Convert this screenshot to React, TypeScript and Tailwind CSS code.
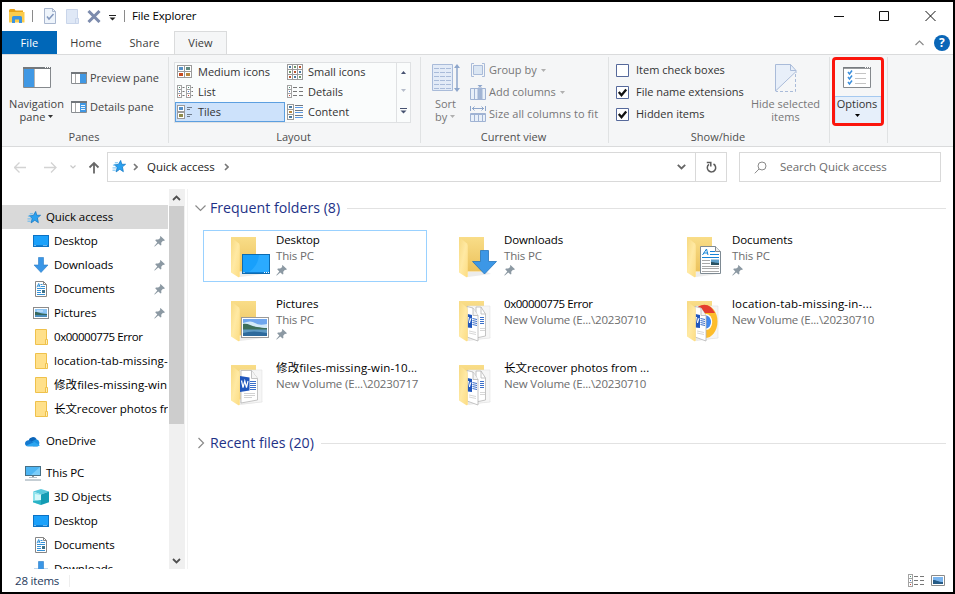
import type { ReactNode } from "react";
import clsx from "clsx";

/* ---------- small icons ---------- */

function Caret({ className = "text-[#333]" }: { className?: string }) {
  return (
    <svg width="5" height="3" viewBox="0 0 5 3" className={clsx("inline-block", className)} fill="currentColor">
      <path d="M0 0h5L2.5 3z" />
    </svg>
  );
}

function Pin() {
  return (
    <svg width="11" height="11" viewBox="0 0 11 11" fill="#8c99a3">
      <path d="M6.5 0 11 4.2 9.7 5 9 4.8 7.2 6.8 7.4 9 6.6 9.6 4.3 7.5 0.8 10.6 0.2 10.2 3.3 6.5 1.2 4.3 2 3.5 4.2 3.6 6.3 1.9 5.9 1z" />
    </svg>
  );
}

function Star() {
  return (
    <svg width="14" height="13" viewBox="0 0 15 14">
      <path d="M9.3 0.5 10.5 4.6 14.6 4.6 11.2 7.4 12.2 12.6 8.4 10 4.4 12.8 5.5 8 2.6 5.2 6.8 4.8z" fill="#2aa1f0" stroke="#1177c4" strokeWidth="0.8" />
      <path d="M3 3h3.500M1 5.500h3M0.5 8.5h4M0.5 11h3.500" stroke="#4fb2f2" strokeWidth="0.9" />
    </svg>
  );
}

function DesktopIcon() {
  return (
    <svg width="16" height="16" viewBox="0 0 16 16">
      <rect x="0.5" y="2.5" width="15" height="11" fill="#1ba1fb" stroke="#0b72c4" />
      <path d="M1 12.5h14" stroke="#0f7fd4" />
      <path d="M1.5 12.5h1M10.5 12.5h1M12.5 12.5h1" stroke="#d5ecff" />
    </svg>
  );
}

function DownloadIcon() {
  return (
    <svg width="16" height="16" viewBox="0 0 16 16">
      <path d="M5.5.5h5v7.500h4.500L8 15.5 1 8h4.500z" fill="#3a96e6" stroke="#2a7cc8" strokeWidth="0.6" />
    </svg>
  );
}

function DocumentIcon() {
  return (
    <svg width="16" height="16" viewBox="0 0 16 16">
      <path d="M2.5.5h8l3 3v12h-11z" fill="#fff" stroke="#868686" />
      <path d="M10.5.5v3h3" fill="none" stroke="#868686" />
      <path d="M4 6.2 5.7 2.5 7.2 6.2M4.8 5h2M7.5 3.5h2M8 5.5h4M4 7.5h8M4 9.5h4M4 11.5h4M4 13.5h8" stroke="#1f86d2" strokeWidth="0.9" fill="none" />
      <rect x="9" y="9" width="3" height="3" fill="#3f7188" />
    </svg>
  );
}

function PictureIcon() {
  return (
    <svg width="16" height="16" viewBox="0 0 16 16">
      <rect x="0.5" y="2.5" width="15" height="11" fill="#fff" stroke="#8b8b8b" />
      <path d="M2 4h12v8H2z" fill="#8cc4f3" />
      <path d="M4 5.500h6v1H4z" fill="#dcefff" />
      <path d="M2 7c3-.5 4 1.500 12 2v1H2z" fill="#36685d" />
      <path d="M2 10h12v2H2z" fill="#4c8dbb" />
    </svg>
  );
}

function FolderIcon() {
  return (
    <svg width="16" height="16" viewBox="0 0 16 16">
      <path d="M2.500.500h11v15h-11z" fill="#ffe08a" stroke="#efc14b" />
      <path d="M12.500 15.500v-5h2v5z" fill="#ffeeb5" stroke="#efc14b" />
    </svg>
  );
}

function CloudIcon() {
  return (
    <svg width="16" height="16" viewBox="0 0 16 16">
      <path d="M3.500 7.500a4.500 4.500 0 0 1 8.200-1.200L8 10z" fill="#0a63b8" />
      <path d="M11.300 6.300a3.700 3.700 0 0 1 1 7H8l-1-5z" fill="#1b8fe0" />
      <path d="M3.600 7.200C1.500 7.400 0 8.500 0 10.400 0 12.200 1.400 13.300 3 13.300h10L6.500 8.200a5 5 0 0 0-2.900-1z" fill="#1479cf" />
      <path d="M1.200 12.600 9.500 9l5.300 3.300c-.5.700-1.200 1-2 1H3c-.700 0-1.300-.300-1.800-.700z" fill="#2ba5f0" />
    </svg>
  );
}

function PcIcon() {
  return (
    <svg width="16" height="16" viewBox="0 0 16 16">
      <rect x="0.5" y="1.500" width="15" height="9" fill="#4db5f3" stroke="#477086" />
      <path d="M15 2v8H6z" fill="#7accf9" />
      <path d="M7 11.500h2" stroke="#8b9399" />
      <path d="M4 12.500h8" stroke="#b8c2c9" />
      <path d="M0 15h16" stroke="#8b9da9" />
    </svg>
  );
}

function CubeIcon() {
  return (
    <svg width="16" height="16" viewBox="0 0 16 16">
      <path d="M8 0 16 2.500 8 5.500 0 2.500z" fill="#57c8dc" />
      <path d="M0 2.500 8 5.500V16L0 13.300z" fill="#8fe3ec" />
      <path d="M2 5 8 6v7l-6-2z" fill="#d5f8fa" />
      <path d="M8 5.500 16 2.500V13.300L8 16z" fill="#149cb4" />
      <path d="M0 12 8 11v5L0 13.300z" fill="#2bb3c6" />
    </svg>
  );
}

/* ---------- large tile icons ---------- */

type Overlay = "desktop" | "downloads" | "documents" | "pictures" | "word" | "words" | "chrome";

function BigFolder({ overlay }: { overlay: Overlay }) {
  const filled = overlay === "word" || overlay === "words" || overlay === "chrome";
  return (
    <svg width="45" height="45" viewBox="0 0 45 45" className="shrink-0">
      <defs>
        <linearGradient id={`back-${overlay}`} x1="0" y1="0" x2="0" y2="1">
          <stop offset="0" stopColor="#f9dd88" />
          <stop offset="1" stopColor="#ebc25c" />
        </linearGradient>
        <linearGradient id={`flap-${overlay}`} x1="0" y1="0" x2="1" y2="1">
          <stop offset="0" stopColor="#f7d981" />
          <stop offset="0.500" stopColor="#ffe9a3" />
          <stop offset="1" stopColor="#fcdc82" />
        </linearGradient>
      </defs>
      <path d="M9 36h19l4 2-23 3z" fill="#ececec" />
      <path d="M0 1h25v34.500H8z" fill={`url(#back-${overlay})`} />
      {filled && (
        <g>
          <path d="M9 6h22v32l-21 2z" fill="#f6f6f6" stroke="#e2e2e2" strokeWidth="0.600" />
          {overlay === "chrome" && (
            <g>
              <ellipse cx="18" cy="21.500" rx="12.500" ry="16.500" fill="#fdbd2c" />
              <path d="M11 6.500Q22 1 28 13H14z" fill="#e43d30" />
              <ellipse cx="19" cy="22" rx="6.200" ry="8" fill="#fff" />
              <ellipse cx="19" cy="22" rx="5" ry="6.500" fill="#4288ed" />
            </g>
          )}
          {overlay === "word" ? (
            <g>
              <path d="M10 6.500h10.500l6 8V36L10 39z" fill="#fff" stroke="#b5b5b5" strokeWidth="0.800" />
              <path d="M20.500 6.500v8h6" fill="#f5f5f5" stroke="#b5b5b5" strokeWidth="0.800" />
              <path d="m9 12 9.500 1.500v13L9 28z" fill="#1f56bd" />
              <path d="m10.500 16.500 1.500 7 1.800-6.500 1.700 6.500 1.500-6.500" stroke="#fff" fill="none" strokeWidth="1.200" />
              <path d="M19 17.500h6M19 19.500h6M19 21.500h6M19 23.500h6M19 25.500h6" stroke="#3b6fc9" strokeWidth="1" />
              <path d="M13 29.500h11M13 31.500h11M13 33.500h8" stroke="#bfbfbf" strokeWidth="0.700" />
            </g>
          ) : (
            <g>
              {overlay === "words" && (
                <g>
                  <path d="M17 7h5l4.500 7v22L17 38z" fill="#fff" stroke="#b5b5b5" strokeWidth="0.800" />
                  <path d="M22 7v7h4.500" fill="none" stroke="#b5b5b5" strokeWidth="0.800" />
                  <path d="M21 17.500h4M21 19.500h4M21 21.500h4M21 23.500h4" stroke="#3b6fc9" />
                  <path d="M21 28.500h5M21 30.500h5" stroke="#c5c5c5" strokeWidth="0.700" />
                </g>
              )}
              <path d="m8 6.500 6 1.500 5 7.500V41L8 37z" fill="#fff" stroke="#b5b5b5" strokeWidth="0.800" />
              <path d="M14 8v7.500h5" fill="#f4f4f4" stroke="#b5b5b5" strokeWidth="0.800" />
              <path d="m8.500 14 4.500 1v13l-4.500-.5z" fill="#1f56bd" />
              <path d="m9.500 17 1 6 1.500-5" stroke="#fff" fill="none" />
              <path d="m13.500 18.500 4.500 1M13.500 20.500l4.500 1M13.500 22.500l4.500 1M13.500 24.500l4.500 1" stroke="#3b6fc9" />
              <path d="m10 31 7 1.500M10 33l7 1.500" stroke="#c5c5c5" strokeWidth="0.700" />
            </g>
          )}
        </g>
      )}
      <path d="M0 1 8 7.500Q8.800 8.500 8.800 10v30.500q-.3 1.200-1.800.500L0 36.500z" fill={`url(#flap-${overlay})`} />
      {overlay === "desktop" && (
        <g>
          <rect x="11.500" y="18.500" width="27" height="19" fill="#18a0fb" stroke="#0d6bb0" />
          <path d="M28 19h10v17H18q9-6 10-17z" fill="#2babff" />
          <path d="M12 36.500h26" stroke="#0f7fd4" />
          <path d="M12.500 36.500h1M33 36.500h1M35 36.500h1M37 36.500h1" stroke="#fff" />
        </g>
      )}
      {overlay === "downloads" && (
        <path d="M21.500 14.500h8v11h8L25.500 38 13.500 25.500h8z" fill="#3c97e6" stroke="#2475bd" strokeWidth="0.800" />
      )}
      {overlay === "documents" && (
        <g>
          <path d="M13.500 10.500h15l5 5v22h-20z" fill="#fff" stroke="#7e8a93" />
          <path d="M28.500 10.500v5h5" fill="#eee" stroke="#7e8a93" />
          <path d="m15.500 19 4-6 1.500 6M16.700 17h4M23 15.500h5M23 18.500h9M15 21.500h17" stroke="#1583d6" fill="none" />
          <path d="M15 24.500h8M15 27.500h8M15 30.500h17M15 32.500h17M15 35.500h17" stroke="#a8a8a8" />
          <rect x="24" y="23.500" width="8" height="5.500" fill="#5f9fc9" />
          <path d="M24 26c3 0 4 1 8 1v2h-8z" fill="#2a5262" />
        </g>
      )}
      {overlay === "pictures" && (
        <g>
          <rect x="10.500" y="17.500" width="27" height="20" fill="#fff" stroke="#9a9a9a" />
          <path d="M12 19h24v17H12z" fill="#6fa6ee" />
          <path d="M12 23q8-3 12 0t12 1v5H12z" fill="#d3e9f9" />
          <path d="M12 24c5-1 8 2 14 3 4 .500 6 1 10 1v2H12z" fill="#3d6f5b" />
          <path d="M12 29.500h24V36H12z" fill="#5f9ac4" />
          <path d="M12 33q10-3 24 0v3H12z" fill="#2e6a9c" />
        </g>
      )}
    </svg>
  );
}

/* ---------- title bar ---------- */

function TitleBar() {
  return (
    <div className="flex h-[29px] items-center pb-px">
      <svg width="16" height="14" viewBox="0 0 16 14" className="ml-[7px]">
        <path d="M0 1.500Q0 0 1.500 0h4l1 1.500h7.500v3H0z" fill="#e8a317" />
        <path d="M0 3h15.500v10.500H0z" fill="#fccc4b" />
        <path d="M3 14V8.500Q3 7 4.500 7h7Q13 7 13 8.500V14h-3v-3.500H6V14z" fill="#3b93e0" />
      </svg>
      <span className="ml-[7px] h-3 w-px bg-[#8a8a8a]" />
      <svg width="12" height="16" viewBox="0 0 12 16" className="ml-[11px]" fill="none">
        <path d="M.500.500h8l3 3v12H.500z" fill="#eef4fb" stroke="#a9b7cf" />
        <path d="M8.500.500v3h3" stroke="#a9b7cf" />
        <path d="m3 8.500 2 2.500 4.500-5" stroke="#8297bd" strokeWidth="1.500" />
      </svg>
      <svg width="13" height="15" viewBox="0 0 13 15" className="ml-[10px]">
        <path d="M.500.500h11v9h1v5h-12z" fill="#dfe8f6" stroke="#c9d5ea" />
        <path d="M9.500 14.500v-5h3" fill="none" stroke="#c9d5ea" />
      </svg>
      <svg width="14" height="13" viewBox="0 0 14 13" className="ml-[8px]" stroke="#7c8bad" strokeWidth="3">
        <path d="m1.500 1 11 11M12.500 1l-11 11" />
      </svg>
      <svg width="7" height="6" viewBox="0 0 7 6" className="mt-[3px] ml-[8px]">
        <path d="M0 .500h7" stroke="#222" />
        <path d="M.500 2.500h6l-3 3z" fill="#222" />
      </svg>
      <span className="ml-[8px] h-3 w-px bg-[#8a8a8a]" />
      <span className="ml-[7px] text-[11.5px] tracking-[-0.15px] text-black">File Explorer</span>
      <svg width="102" height="12" viewBox="0 0 102 12" className="mr-[17px] ml-auto" fill="none" stroke="#111">
        <path d="M0 6.500h10M45.500 1.500h9v9h-9z" />
        <path d="m91.500 1 10 10M101.500 1l-10 10" />
      </svg>
    </div>
  );
}

function Tabs() {
  return (
    <div className="flex h-[23px] text-[11px] tracking-[0.1px] text-[#3b3b3b]">
      <div className="flex w-[55px] items-center justify-center bg-[#0067b8] pt-px text-white">File</div>
      <div className="flex w-[58px] items-center justify-center pt-px">Home</div>
      <div className="flex w-[59px] items-center justify-center pt-px">Share</div>
      <div className="-mb-px flex w-[53px] items-center justify-center border border-b-0 border-[#dadbdc] bg-[#f5f6f7]">View</div>
      <div className="ml-auto flex items-center">
        <svg width="9" height="6" viewBox="0 0 9 6" fill="none" stroke="#8a8a8a" className="mr-[10px]">
          <path d="m.500 5 4-4 4 4" strokeWidth="1.200" />
        </svg>
        <div className="mr-[3px] flex h-4 w-4 items-center justify-center rounded-full bg-[#0a66b7] text-xs font-bold text-white">?</div>
      </div>
    </div>
  );
}

/* ---------- ribbon ---------- */

function Group({ label, className, children }: { label: string; className: string; children: ReactNode }) {
  return (
    <div className={clsx("flex flex-col", className)}>
      <div className="flex h-[75px]">{children}</div>
      <div className="h-[14px] pr-[2px] text-center leading-[14px] text-[#4e4e4e]">{label}</div>
    </div>
  );
}

function Divider() {
  return <div className="mt-[2px] h-[86px] w-px bg-[#e0e2e3]" />;
}

function PaneIcon({ details }: { details?: boolean }) {
  return (
    <svg width="16" height="12" viewBox="0 0 16 12">
      <path d="M.500.500h15v11H.500z" fill="#fff" stroke="#898d91" />
      <path d="M0 1h16" stroke="#72777c" strokeWidth="2" />
      <path d="M4.500 2v9" stroke="#a9a9a9" />
      <path d="M9 2h6v9H9z" fill="#4098e4" />
      {details && <path d="M10 4.500h4M10 6.500h4M10 8.500h4" stroke="#fff" strokeWidth="0.900" />}
    </svg>
  );
}

function Thumb({ x, y, tone }: { x: number; y: number; tone: string }) {
  return (
    <g>
      <rect x={x + 0.5} y={y + 0.5} width="7" height="6" fill="#fff" stroke="#9b9b9b" />
      <rect x={x + 2} y={y + 2} width="4" height="3" fill={tone} />
    </g>
  );
}

function Dots({ x }: { x: number }) {
  return (
    <g>
      {["#4a8a72", "#4a79c9", "#c94a3d"].map((t, i) => (
        <g key={t}>
          <rect x={x + 0.5} y={i * 4 + 1.5} width="4" height="4" fill="#fff" stroke="#a3a3a3" />
          <rect x={x + 2} y={i * 4 + 3} width="1" height="1" fill={t} />
        </g>
      ))}
    </g>
  );
}

function LayoutIcon({ kind }: { kind: string }) {
  return (
    <svg width="16" height="16" viewBox="0 0 16 16">
      {kind === "medium" && (
        <g>
          <Thumb x={0} y={1} tone="#5590c8" />
          <Thumb x={7} y={1} tone="#628a80" />
          <Thumb x={0} y={7} tone="#c84a1e" />
          <Thumb x={7} y={7} tone="#b8863c" />
        </g>
      )}
      {kind === "small" &&
        [0, 5, 10].map((y, r) =>
          [0, 5, 10].map((x, c) => (
            <g key={`${x}-${y}`}>
              <rect x={x + 0.5} y={y + 0.5} width="5" height="5" fill="#fff" stroke="#9b9b9b" />
              <rect x={x + 2} y={y + 2} width="2" height="2" fill={(r + c) % 3 === 0 ? "#47799f" : (r + c) % 3 === 1 ? "#6d9467" : "#b8532e"} />
            </g>
          )),
        )}
      {kind === "list" && (
        <g>
          <Dots x={0} />
          <Dots x={9} />
          <path d="M5.500 3.500h2M5.500 7.500h2M5.500 11.500h2M14.500 3.500h2M14.500 7.500h2M14.500 11.500h2" stroke="#777" />
        </g>
      )}
      {kind === "details" && (
        <g>
          <Dots x={0} />
          <path d="M6 3.500h4M12 3.500h4M6 7.500h4M12 7.500h4M6 11.500h4M12 11.500h4" stroke="#777" />
        </g>
      )}
      {kind === "tiles" && (
        <g>
          <Thumb x={0} y={1} tone="#5590c8" />
          <Thumb x={0} y={8} tone="#8f8a4a" />
          <path d="M10 3.500h5M10 5.500h3M10 10.500h5M10 12.500h3" stroke="#6f7c8c" />
        </g>
      )}
      {kind === "content" && (
        <g>
          {[0, 5, 10].map((y, i) => (
            <g key={y}>
              <rect x="0.5" y={y + 0.5} width="6" height="5" fill="#fff" stroke="#9b9b9b" />
              <rect x="2" y={y + 2} width="3" height="2" fill={["#47799f", "#b8863c", "#47799f"][i]} />
            </g>
          ))}
          <path d="M8 1.500h8M8 6.500h8M8 11.500h8" stroke="#707780" />
          <path d="M8 3.500h8M8 8.500h8M8 13.500h8" stroke="#5c9be8" />
        </g>
      )}
    </svg>
  );
}

const layouts = [
  ["medium", "Medium icons"],
  ["small", "Small icons"],
  ["list", "List"],
  ["details", "Details"],
  ["tiles", "Tiles"],
  ["content", "Content"],
];

function CheckRow({ label, checked }: { label: string; checked?: boolean }) {
  return (
    <div className="flex h-[22px] items-center gap-[7px]">
      <svg width="13" height="13" viewBox="0 0 13 13" className="shrink-0">
        <path d="M.500.500h12v12H.500z" fill="#fff" stroke="#56699b" />
        {checked && <path d="m2.800 6 2.700 3.200L10.200 3.500" fill="none" stroke="#111" strokeWidth="2.300" />}
      </svg>
      <span className="text-[#333]">{label}</span>
    </div>
  );
}

function Ribbon() {
  return (
    <div className="flex h-[93px] border-y border-[#dadbdc] bg-[#f5f6f7] text-[11px] whitespace-nowrap text-[#444]">
      <Group label="Panes" className="w-[166px]">
        <div className="flex w-[69px] flex-col items-center pt-[12px]">
          <svg width="28" height="21" viewBox="0 0 28 21">
            <path d="M.500.500h27v20H.500z" fill="#fff" stroke="#85898d" />
            <path d="M0 1h28" stroke="#74787c" strokeWidth="2" />
            <path d="M1 2h10v18H1z" fill="#4098e4" />
            <path d="M11.500 2v18" stroke="#b5b5b5" />
            <path d="M22 .500h1M24 .500h1M26 .500h1" stroke="#fff" />
          </svg>
          <div className="mt-[9px] text-center leading-[13px]">
            <div>Navigation</div>
            <div className="flex items-center justify-center gap-[3px]">pane<Caret /></div>
          </div>
        </div>
        <div className="flex flex-col gap-[13px] pt-[15px]">
          <div className="flex h-4 items-center gap-[3px]"><PaneIcon />Preview pane</div>
          <div className="flex h-4 items-center gap-[3px]"><PaneIcon details />Details pane</div>
        </div>
      </Group>
      <Divider />
      <Group label="Layout" className="w-[251px]">
        <div className="mt-[7px] ml-[5px] flex h-[61px] w-[237px] border border-[#dfe1e3] bg-[#fafcfc]">
          <div className="-mt-px grid w-[221px] grid-cols-[110px_111px] grid-rows-[20px_20px_20px]">
            {layouts.map(([kind, label]) => (
              <div
                key={kind}
                className={clsx(
                  "flex h-5 items-center gap-[5px] text-[#333]",
                  kind === "tiles" ? "border border-[#5c9fe0] bg-[#cde2fb] pl-px" : "pl-[2px]",
                )}
              >
                <LayoutIcon kind={kind} />
                {label}
              </div>
            ))}
          </div>
          <div className="flex w-[14px] flex-col items-center justify-around border-l border-[#dfe1e3]">
            <svg width="5" height="3" viewBox="0 0 5 3" fill="#465271"><path d="M0 3h5L2.500 0z" /></svg>
            <Caret className="text-[#b6bdcb]" />
            <svg width="7" height="6" viewBox="0 0 7 6"><path d="M0 .500h7" stroke="#465271" /><path d="M.500 2.500h6l-3 3z" fill="#465271" /></svg>
          </div>
        </div>
      </Group>
      <Divider />
      <Group label="Current view" className="w-[187px]">
        <div className="flex w-[49px] flex-col items-center pt-[9px] text-[#777]">
          <svg width="28" height="28" viewBox="0 0 28 28" fill="none" stroke="#a9bbd9">
            <path d="M.500.500h20v26H.500z" fill="#e3ebf7" />
            <path d="M2 4.500h17M2 8.500h17M2 12.500h17M2 16.500h17M2 20.500h17M2 24.500h17" strokeDasharray="5 1" />
            <path d="M25 2v24" stroke="#8ea6cb" strokeWidth="1.500" />
            <path d="m22 4 3-4 3 4zM22 24l3 4 3-4z" fill="#8ea6cb" stroke="none" />
          </svg>
          <div className="mt-[5px] text-center leading-[13px]">
            <div>Sort</div>
            <div className="flex items-center gap-[3px]">by<Caret className="text-[#b0b0b0]" /></div>
          </div>
        </div>
        <div className="flex flex-col pt-[4px] text-[#777]">
          <div className="flex h-[22px] items-center gap-[3px]">
            <svg width="16" height="16" viewBox="0 0 16 16" fill="none" stroke="#a9bbd9">
              <path d="M4 1.500H1.500v13H4M12 1.500h2.500v13H12" />
              <path d="M3.500 3.500h9v9h-9z" fill="#dbe6f3" />
            </svg>
            Group by<Caret className="ml-px text-[#b0b0b0]" />
          </div>
          <div className="flex h-[22px] items-center gap-[3px]">
            <svg width="16" height="16" viewBox="0 0 16 16" fill="none" stroke="#a0b3d3">
              <path d="M.500 4.500h15v11H.500z" fill="#e9f0f9" />
              <path d="M8 4h4v11H8z" fill="#a3b7d6" />
              <path d="M4.500 5v10M10.500 5v10" />
              <path d="M7.500 1h5L10 3.500z" fill="#8ea6cb" stroke="none" />
            </svg>
            Add columns<Caret className="ml-px text-[#b0b0b0]" />
          </div>
          <div className="flex h-[22px] items-center gap-[3px] tracking-[0.06px]">
            <svg width="16" height="16" viewBox="0 0 16 16" fill="none" stroke="#a0b3d3">
              <path d="M.500 0v5M15.500 0v5M2 2.500h12M4.500.500l-2 2 2 2M11.500.500l2 2-2 2" stroke="#8ea6cb" />
              <path d="M.500 7.500h15v8H.500z" fill="#e9f0f9" />
              <path d="M0 8.500h16M4.500 9v7M8.500 9v7M12.500 9v7" />
            </svg>
            Size all columns to fit
          </div>
        </div>
      </Group>
      <Divider />
      <Group label="Show/hide" className="w-[220px]">
        <div className="w-[134px] pt-[4px] pl-[7px]">
          <CheckRow label="Item check boxes" />
          <CheckRow label="File name extensions" checked />
          <CheckRow label="Hidden items" checked />
        </div>
        <div className="flex w-[85px] flex-col items-center pt-[9px] text-[#777]">
          <svg width="22" height="28" viewBox="0 0 22 28" fill="none" stroke="#a9bbd9">
            <path d="M.500 27V.500H16l5 6z" fill="#e8eff9" stroke="none" />
            <path d="M.500 27V.500h15l5.500 6V9M15.500.500v6H21M.500 27 20.500 8" />
            <path d="M20.500 10v17.500H1" strokeDasharray="3 2" />
          </svg>
          <div className="mt-[5px] text-center leading-[13px]">
            <div>Hide selected</div>
            <div>items</div>
          </div>
        </div>
      </Group>
      <Divider />
      <div className="mt-[2px] ml-[2px] h-[69px] w-[52px] rounded-[4px] border-[3px] border-[#fb150c]">
        <div className="flex h-[37px] border-b border-[#a5c9f0] pt-[7px] pl-[8px]">
          <svg width="28" height="21" viewBox="0 0 28 21">
            <path d="M.500.500h27v20H.500z" fill="#fff" stroke="#85898d" />
            <path d="M0 1h28" stroke="#74787c" strokeWidth="1.500" />
            <path d="M22 .500h1M24 .500h1M26 .500h1" stroke="#fff" />
            <path d="M12 6.500h11M12 11.500h11M12 16.500h11" stroke="#c4c4c4" />
            <path d="m5 5 1.500 2L9 3.500M5 10l1.500 2L9 8.500M5 15l1.500 2L9 13.500" fill="none" stroke="#3c8fdc" strokeWidth="1.500" />
          </svg>
        </div>
        <div className="flex h-[26px] flex-col items-center border-x border-[#d2e2f4] bg-[#e6effa] pr-[2px] leading-[13px] text-[#333]">
          Options
          <Caret className="mt-[4px] text-black" />
        </div>
      </div>
      <div className="mt-[2px] ml-[3px] h-[86px] w-px bg-[#e0e2e3]" />
    </div>
  );
}

/* ---------- address bar ---------- */

function AddressRow() {
  return (
    <div className="flex h-[42px] pt-[5px] text-[11.5px] tracking-[-0.05px] text-[#222]">
      <svg width="88" height="30" viewBox="0 0 88 30" fill="none" className="ml-[12px]">
        <path d="M12 15.500H.800M5.500 10.500l-5 5 5 5M30 15.500h11.500M37 10.500l5 5-5 5" stroke="#d3d3d3" strokeWidth="1.300" />
        <path d="m56.500 13.500 2.500 2.500 2.500-2.500" stroke="#c8c8c8" strokeWidth="1.200" />
        <path d="M80 21.500V11M75.500 15.500 80 11l4.500 4.500" stroke="#686868" strokeWidth="1.800" />
      </svg>
      <div className="ml-[5px] flex h-[30px] w-[620px] items-center border border-[#d9d9d9]">
        <div className="ml-[4px] pb-px"><Star /></div>
        <svg width="5" height="8" viewBox="0 0 5 8" fill="none" stroke="#777" strokeWidth="1.600" className="ml-[7px]"><path d="m1 1 3 3-3 3" /></svg>
        <span className="ml-[9px]">Quick access</span>
        <svg width="5" height="8" viewBox="0 0 5 8" fill="none" stroke="#777" strokeWidth="1.600" className="ml-[9px]"><path d="m1 1 3 3-3 3" /></svg>
        <svg width="9" height="6" viewBox="0 0 9 6" fill="none" stroke="#666" strokeWidth="1.800" className="mr-[9px] ml-auto"><path d="m.800.800 3.700 3.700L8.200.800" /></svg>
        <div className="flex h-full w-[31px] items-center justify-center border-l border-[#d9d9d9]">
          <svg width="11" height="12" viewBox="0 0 11 12" fill="none" stroke="#5b5b5b" strokeWidth="1.500">
            <path d="M7.500 3a4.200 4.200 0 1 1-4.500.3" />
            <path d="M.800 1.500h4V5.500" />
          </svg>
        </div>
      </div>
      <div className="ml-[12px] flex h-[30px] w-[202px] items-center border border-[#d9d9d9] text-[#6a6a6a]">
        <svg width="13" height="13" viewBox="0 0 13 13" fill="none" stroke="#8a8a8a" className="ml-[14px]">
          <circle cx="8" cy="5" r="4" />
          <path d="M5 8 .800 12.300" />
        </svg>
        <span className="ml-[13px]">Search Quick access</span>
      </div>
    </div>
  );
}

/* ---------- navigation pane ---------- */

type NavItemProps = { icon: ReactNode; label: string; root?: boolean; pinned?: boolean; active?: boolean; tracking?: string };

function NavItem({ icon, label, root, pinned, active, tracking }: NavItemProps) {
  return (
    <div className={clsx("flex h-6 shrink-0 items-center whitespace-nowrap", root ? "pl-[23px]" : "pl-[31px]", active && "bg-[#d9d9d9]")}>
      <span className={clsx("flex w-4 shrink-0", active && "justify-end")}>{icon}</span>
      <span className={clsx("ml-[5px]", tracking)}>{label}</span>
      {pinned && <span className="mr-[3px] ml-auto"><Pin /></span>}
    </div>
  );
}

function NavPane() {
  return (
    <div className="flex h-[380px] w-[186px] shrink-0 border-r border-[#f3f3f3] text-[11.5px] tracking-[-0.1px] text-black">
      <div className="flex h-full w-[166px] flex-col overflow-hidden pt-4">
        <NavItem icon={<Star />} label="Quick access" root active />
        <NavItem icon={<DesktopIcon />} label="Desktop" pinned />
        <NavItem icon={<DownloadIcon />} label="Downloads" pinned />
        <NavItem icon={<DocumentIcon />} label="Documents" pinned />
        <NavItem icon={<PictureIcon />} label="Pictures" pinned />
        <NavItem icon={<FolderIcon />} label="0x00000775 Error" tracking="tracking-[-0.45px]" />
        <NavItem icon={<FolderIcon />} label="location-tab-missing-" tracking="tracking-[0.08px]" />
        <NavItem icon={<FolderIcon />} label="修改files-missing-win" tracking="tracking-[0.08px]" />
        <NavItem icon={<FolderIcon />} label="长文recover photos fr" tracking="tracking-[-0.07px]" />
        <div className="h-2 shrink-0" />
        <NavItem icon={<CloudIcon />} label="OneDrive" root />
        <div className="h-2 shrink-0" />
        <NavItem icon={<PcIcon />} label="This PC" root />
        <NavItem icon={<CubeIcon />} label="3D Objects" />
        <NavItem icon={<DesktopIcon />} label="Desktop" />
        <NavItem icon={<DocumentIcon />} label="Documents" />
        <NavItem icon={<DownloadIcon />} label="Downloads" />
      </div>
      {/* Scrollbar */}
      <div className="ml-px flex w-4 flex-col items-center bg-[#f0f0f0]">
        <svg width="16" height="17" viewBox="0 0 16 17" fill="none" stroke="#505050" strokeWidth="1.800"><path d="m4 11 3.500-3.500L11 11" /></svg>
        <div className="h-[218px] w-[15px] self-start bg-[#cdcdcd]" />
        <svg width="16" height="17" viewBox="0 0 16 17" fill="none" stroke="#505050" strokeWidth="1.800" className="mt-auto"><path d="m4 7 3.500 3.500L11 7" /></svg>
      </div>
    </div>
  );
}

/* ---------- content ---------- */

type Item = { name: string; path: string; overlay: Overlay; pinned?: boolean; tracking?: string };

const folders: Item[] = [
  { name: "Desktop", path: "This PC", overlay: "desktop", pinned: true },
  { name: "Downloads", path: "This PC", overlay: "downloads", pinned: true },
  { name: "Documents", path: "This PC", overlay: "documents", pinned: true },
  { name: "Pictures", path: "This PC", overlay: "pictures", pinned: true },
  { name: "0x00000775 Error", path: "New Volume (E...\\20230710", overlay: "words", tracking: "tracking-[-0.45px]" },
  { name: "location-tab-missing-in-...", path: "New Volume (E...\\20230710", overlay: "chrome", tracking: "tracking-[0.2px]" },
  { name: "修改files-missing-win-10...", path: "New Volume (E...\\20230717", overlay: "word", tracking: "tracking-[0.15px]" },
  { name: "长文recover photos from ...", path: "New Volume (E...\\20230710", overlay: "words", tracking: "tracking-[0px]" },
];

function SectionHeader({ label, open }: { label: string; open?: boolean }) {
  return (
    <div className="flex h-6 items-center">
      <svg width="12" height="12" viewBox="0 0 12 12" fill="none" stroke="#8a8a8a" strokeWidth="1.200" className="ml-[7px]">
        {open ? <path d="m.500 3.500 5 5 5-5" /> : <path d="m3.500 1 5 5-5 5" />}
      </svg>
      <span className="ml-[3px] text-[14.2px] text-[#1e3287]">{label}</span>
      <span className="mr-[7px] ml-[7px] h-px flex-1 bg-[#e2e2e2]" />
    </div>
  );
}

function Content() {
  return (
    <div className="flex-1 pt-[7px]">
      <SectionHeader label="Frequent folders (8)" open />
      <div className="mt-[10px] ml-[15px] grid grid-cols-[224px_224px_224px] gap-x-1 gap-y-3">
        {folders.map((f, i) => (
          <div key={f.name} className={clsx("flex h-[52px] border pt-px pl-[27px]", i === 0 ? "border-[#99d1ff]" : "border-transparent")}>
            <div className="mt-[4px] w-[45px] shrink-0"><BigFolder overlay={f.overlay} /></div>
            <div className="text-[11.5px] leading-4 whitespace-nowrap">
              <div className={clsx("text-black", f.tracking ?? "tracking-[-0.1px]")}>{f.name}</div>
              <div className="tracking-[-0.17px] text-[#6d6d6d]">{f.path}</div>
              {f.pinned && <div className="pt-px"><Pin /></div>}
            </div>
          </div>
        ))}
      </div>
      <div className="mt-[21px]">
        <SectionHeader label="Recent files (20)" />
      </div>
    </div>
  );
}

function StatusBar() {
  return (
    <div className="flex h-[23px] items-center text-[11.5px] tracking-[-0.2px] text-[#1e395b]">
      <span className="ml-[13px]">28 items</span>
      <span className="ml-[10px] h-3 w-px bg-[#eee]" />
      <svg width="38" height="14" viewBox="0 0 38 14" className="mr-[7px] mb-[2px] ml-auto">
        <Dots x={0} />
        <path d="M6 3.500h4M12 3.500h4M6 7.500h4M12 7.500h4M6 11.500h4M12 11.500h4" stroke="#777" />
        <path d="M23.500 2.500h13v10h-13z" fill="#fff" stroke="#8a8a8a" />
        <path d="M25 4h10v7H25z" fill="#7ab5ef" />
        <path d="M25 7c4 0 5 2 10 2v2H25z" fill="#265b86" />
      </svg>
    </div>
  );
}

export default function App() {
  return (
    <div className="flex h-[594px] w-[955px] flex-col overflow-hidden border-2 border-black bg-white font-['Open_Sans','Noto_Sans_CJK_SC',sans-serif]">
      <TitleBar />
      <Tabs />
      <Ribbon />
      <AddressRow />
      <div className="flex h-[380px]">
        <NavPane />
        <Content />
      </div>
      <StatusBar />
    </div>
  );
}
